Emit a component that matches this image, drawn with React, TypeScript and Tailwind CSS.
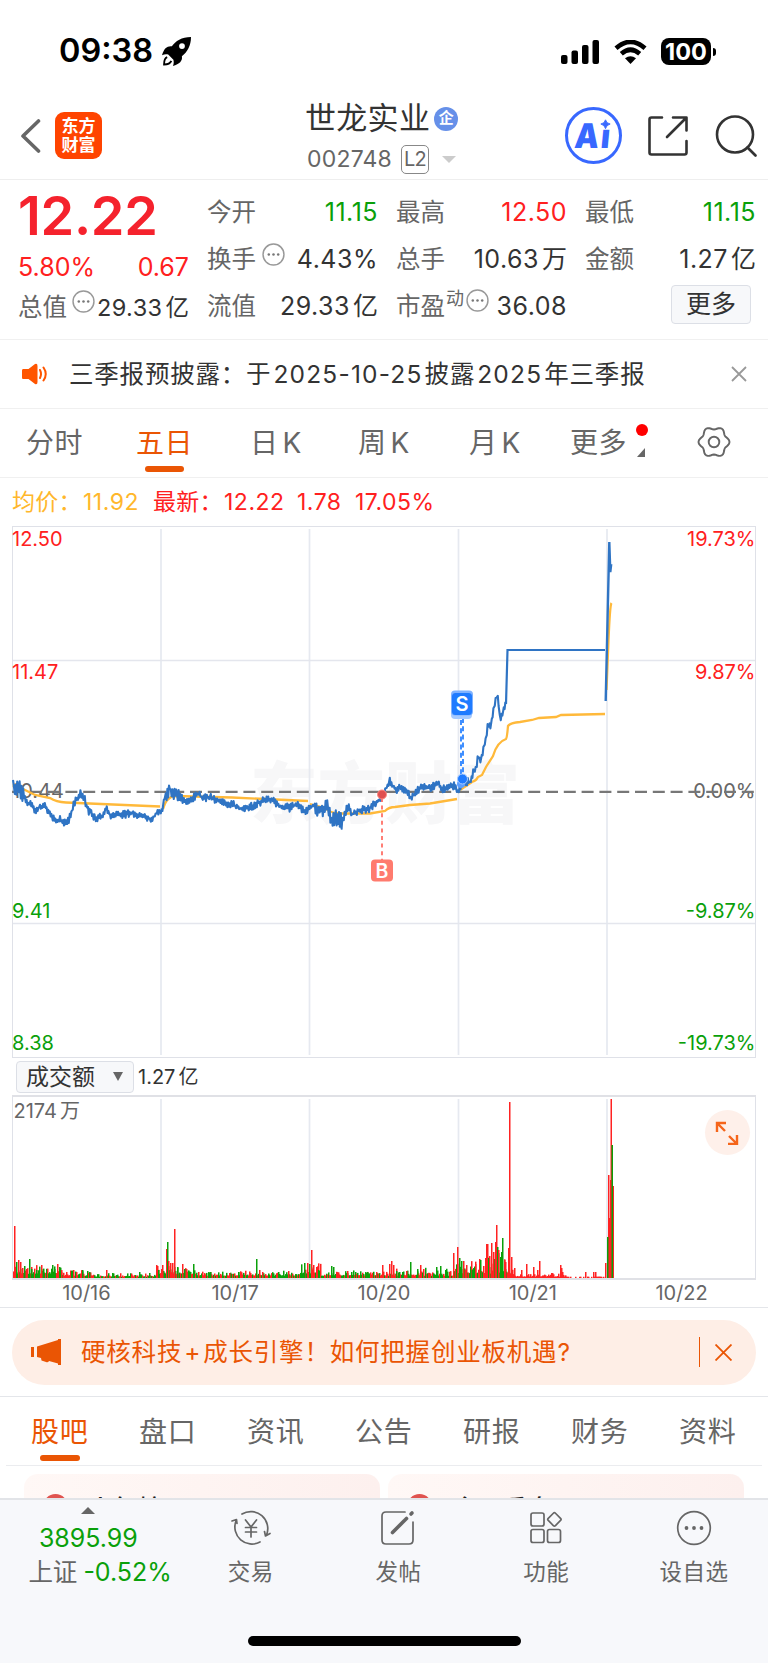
import type { ReactNode } from 'react'

type Point = [number, number]
type Bar = [number, number, 'r' | 'g']

const UP = '#ff2222'
const DOWN = '#0aa00a'

const priceLine: Point[] = [
  [13, 780], [14, 795], [18, 786], [20, 790], [25, 797], [28, 803], [32, 806], [36, 811], [40, 806], [45, 807],
  [49, 811], [52, 817], [56, 820], [60, 820], [64, 822], [69, 820], [72, 810], [74, 804], [78, 797], [81, 793],
  [84, 797], [88, 810], [92, 814], [95, 819], [99, 817], [102, 819], [106, 808], [110, 815], [120, 815],
  [130, 813], [140, 815], [150, 819], [154, 818], [156, 813], [160, 813], [163, 808], [165, 795], [170, 788],
  [173, 793], [177, 792], [183, 800], [190, 802], [198, 793], [202, 798], [210, 797], [218, 801], [225, 803],
  [232, 804], [240, 809], [248, 808], [258, 803], [265, 799], [272, 800], [280, 806], [290, 808], [297, 804],
  [304, 812], [308, 809], [312, 807], [314, 803], [318, 810], [324, 808], [328, 803], [331, 825], [335, 818],
  [340, 820], [343, 823], [345, 812], [348, 805], [352, 815], [358, 810], [365, 810], [370, 808], [376, 802],
  [382, 798], [386, 790], [389, 780], [393, 786], [396, 791], [400, 786], [407, 792], [411, 798], [417, 791],
  [422, 786], [430, 788], [438, 784], [443, 789], [450, 786], [456, 786], [458, 793], [463, 782], [470, 782],
  [474, 771], [476, 767], [478, 757], [481, 761], [484, 748], [486, 738], [488, 724], [491, 727], [494, 708],
  [497, 693], [499, 706], [500, 720], [503, 713], [506, 704],
]

const avgDays = [
  'M13 784 L25 790 L35 795 L50 798 Q56 802 66 802.500 L160 806.500',
  'M163 809 Q166 797 175 796 L232 797.500 L308 801',
  'M310 804 L325 808 Q330 813 340 813.500 L370 813.500 L385 811 Q389 807 395 807 L410 805 L430 803.500 L457 799',
  'M460 790 L472 782 Q476 781 478 777 L482 775 L486 767 L493 756 Q497 742 506 739 Q507 738 508 726 Q510 723 520 722 L532 720 L539 718 L556 717 L561 715 L605 714',
  'M606.500 690 L608.500 640 Q610 605 611.500 603',
]

const spikes: Bar[] = [
  [14, 52, 'r'], [16, 16, 'g'], [18, 18, 'r'], [20, 16, 'r'], [22, 10, 'r'], [24, 12, 'g'], [26, 9, 'r'],
  [29, 19, 'g'], [31, 9, 'g'], [36, 8, 'g'], [41, 13, 'r'], [43, 6, 'g'], [52, 13, 'g'], [54, 9, 'g'], [57, 14, 'r'],
  [59, 11, 'g'], [61, 8, 'r'], [66, 6, 'r'], [73, 8, 'r'], [76, 6, 'r'], [82, 8, 'g'], [89, 6, 'g'], [106, 8, 'r'],
  [112, 5, 'g'], [139, 6, 'g'], [149, 5, 'g'], [156, 13, 'r'], [158, 8, 'g'], [162, 13, 'r'], [166, 29, 'r'],
  [167, 36, 'g'], [168, 17, 'r'], [170, 15, 'r'], [172, 15, 'r'], [174, 49, 'r'], [177, 11, 'g'], [182, 14, 'r'],
  [184, 9, 'g'], [193, 14, 'g'], [198, 6, 'r'], [210, 6, 'g'], [229, 5, 'r'], [238, 6, 'g'], [256, 19, 'g'],
  [259, 8, 'r'], [262, 6, 'r'], [278, 6, 'g'], [288, 7, 'r'], [304, 15, 'g'], [307, 15, 'r'], [309, 14, 'g'],
  [311, 28, 'r'], [313, 13, 'r'], [316, 11, 'r'], [318, 8, 'g'], [331, 12, 'g'], [333, 11, 'g'], [336, 6, 'r'],
  [347, 7, 'r'], [351, 6, 'g'], [367, 6, 'g'], [376, 6, 'r'], [382, 13, 'r'], [389, 14, 'r'], [391, 17, 'r'],
  [393, 13, 'r'], [396, 7, 'g'], [402, 6, 'g'], [406, 7, 'r'], [410, 16, 'g'], [417, 9, 'g'], [420, 13, 'r'],
  [423, 9, 'r'], [436, 11, 'g'], [440, 12, 'g'], [445, 8, 'g'], [453, 25, 'r'], [457, 31, 'r'], [459, 20, 'g'],
  [461, 17, 'g'], [463, 17, 'r'], [466, 13, 'r'], [470, 8, 'g'], [475, 14, 'r'], [479, 19, 'r'], [480, 18, 'g'],
  [485, 20, 'r'], [486, 34, 'r'], [487, 34, 'r'], [488, 20, 'g'], [489, 22, 'r'], [491, 35, 'r'], [493, 26, 'r'],
  [495, 36, 'r'], [496, 53, 'r'], [497, 31, 'g'], [498, 28, 'r'], [500, 21, 'g'], [501, 26, 'g'], [502, 40, 'g'],
  [504, 18, 'r'], [505, 16, 'r'], [508, 30, 'r'], [509, 176, 'r'], [511, 21, 'r'], [514, 10, 'r'], [521, 8, 'r'],
  [526, 14, 'r'], [533, 11, 'r'], [537, 8, 'r'], [539, 17, 'r'], [551, 5, 'r'], [560, 13, 'r'], [561, 10, 'r'],
  [562, 6, 'r'], [585, 6, 'r'], [593, 6, 'r'], [595, 6, 'r'], [605, 15, 'r'], [608, 103, 'r'], [607, 41, 'g'],
  [609, 60, 'r'], [610, 98, 'r'], [612.5, 92, 'r'], [610.5, 179, 'r'], [611.5, 133, 'g'],
]

// ceiling of the quiet trading volume between the spikes: [until x, height]
const quietLevels: Point[] = [
  [60, 9], [90, 6], [155, 4], [190, 9], [300, 5], [320, 9], [380, 5], [395, 6], [452, 7], [470, 10], [484, 12],
  [507, 18], [512, 8], [545, 3], [566, 3], [604, 0.6],
]

function rand(n: number) {
  const v = Math.sin(n * 127.1 + 311.7) * 43758.5453
  return v - Math.floor(v)
}

function jitterPath(points: Point[]) {
  let d = `M${points[0][0]} ${points[0][1]}`
  let k = 0
  for (let i = 1; i < points.length; i++) {
    const [x0, y0] = points[i - 1]
    const [x1, y1] = points[i]
    for (let x = x0 + 0.8; x <= x1; x += 0.8) {
      const t = (x - x0) / (x1 - x0)
      const amp = x < 24 || (x > 310 && x < 348) || (x > 165 && x < 180) ? 8 : 4
      const y = y0 + (y1 - y0) * t + (k % 2 ? 1 : -1) * rand(k) * amp
      d += ` L${x.toFixed(1)} ${y.toFixed(1)}`
      k++
    }
  }
  return d
}

function quietBars() {
  const bars: Bar[] = []
  for (let x = 13; x < 604; x++) {
    const level = quietLevels.find(([until]) => x <= until)?.[1] ?? 0
    if (level < 1 && rand(x) > 0.4) continue
    const h = 1.2 + rand(x) * rand(x + 900) * level * 1.3 + (level > 7 ? 3 : level > 4 ? 1 : 0)
    bars.push([x, h, x > 510 || rand(x * 3) > 0.55 ? 'r' : 'g'])
  }
  return bars
}

function gearPath() {
  let d = ''
  for (let a = 0; a < 360; a += 6) {
    const t = (a * Math.PI) / 180
    const r = 14 + 1.5 * Math.cos(6 * t)
    d += `${a ? 'L' : 'M'}${(17 + r * Math.cos(t)).toFixed(2)} ${(17 + r * Math.sin(t)).toFixed(2)}`
  }
  return d + 'Z'
}

function More() {
  return (
    <svg viewBox="0 0 22 22" className="size-[23px] shrink-0">
      <circle cx="11" cy="11" r="10" fill="none" stroke="#999" strokeWidth="1.4" />
      {[6.5, 11, 15.5].map((x) => (
        <circle key={x} cx={x} cy="11" r="1.200" fill="#777" />
      ))}
    </svg>
  )
}

type StatProps = {
  label: string
  value: string
  unit?: string
  color?: string
  children?: ReactNode
}

function Stat({ label, value, unit, color = 'text-[#333]', children }: StatProps) {
  return (
    <div className="flex h-[47px] items-center">
      <span className="text-[24.5px] text-[#666]">{label}</span>
      {children}
      <span className={`ml-auto text-[25px] tracking-[0.5px] ${color}`}>
        {value}
        {unit && <span className="ml-[3px] tracking-normal">{unit}</span>}
      </span>
    </div>
  )
}

function StatusBar() {
  return (
    <div className="flex h-[85px] shrink-0 items-center pt-[18px] pl-[59px] pr-[52px] text-black">
      <span className="text-[32.5px] font-semibold">09:38</span>
      <svg viewBox="0 0 28 28" className="ml-[9px] size-[29px]">
        <path d="M28 0C19 0 13 4 9.5 9C5 8.5 2 11 0 17.5C2.5 16.5 4.5 16.5 6 17L11 22C11.5 24 11.5 26 10.5 28C17 26 20 23 19.2 18.5C24.500 14.500 28 8.500 28 0Z" />
        <circle cx="19.300" cy="8.800" r="2.800" fill="#fff" />
        <path d="M5 19.500C2.500 20.500 2 23 2 26.500C5.500 26.500 8 25.500 9 23" fill="none" stroke="#000" strokeWidth="1.800" />
      </svg>
      <div className="ml-auto flex items-center">
        <svg viewBox="0 0 39 24" className="h-6 w-[39px]">
          <rect x="0" y="15" width="6.500" height="9" rx="2" />
          <rect x="10.500" y="10.500" width="6.500" height="13.500" rx="2" />
          <rect x="21" y="5" width="6.500" height="19" rx="2" />
          <rect x="31.500" y="0" width="6.500" height="24" rx="2" />
        </svg>
        <svg viewBox="0 0 33 24" className="ml-[14px] h-6 w-[33px]">
          <path d="M2 8.300Q16.500 -4.500 31 8.300M7.300 13.800Q16.500 5.700 25.700 13.800" fill="none" stroke="#000" strokeWidth="4.600" />
          <path d="M16.500 24L11 18.300Q16.500 14 22 18.300Z" />
        </svg>
        <div className="ml-[14px] flex h-[27px] w-[50px] items-center justify-center rounded-[8px] bg-black text-[23.5px] font-bold text-white">
          100
        </div>
        <div className="ml-[2px] h-[8px] w-[3px] rounded-r-full bg-black" />
      </div>
    </div>
  )
}

function Header() {
  return (
    <div className="flex h-[95px] shrink-0 items-center border-b border-[#eee] pt-[7px] pl-[20px] pr-[11px]">
      <svg viewBox="0 0 21 36" className="h-9 w-[21px]" fill="none" stroke="#666" strokeWidth="3.600" strokeLinecap="round" strokeLinejoin="round">
        <path d="M18.500 3L3 18L18.500 33" />
      </svg>
      <div className="ml-[14px] flex size-[47px] flex-col items-center justify-center rounded-[9px] bg-[#ff4400] text-[17px] leading-[19px] font-bold text-white">
        <span>东方</span>
        <span>财富</span>
      </div>
      <div className="ml-[203px] flex flex-col pt-[3px]">
        <div className="flex h-[40px] items-center">
          <span className="text-[31px] tracking-[0.3px] text-[#333]">世龙实业</span>
          <span className="mt-[1px] ml-[4px] flex size-[24px] items-center justify-center rounded-full bg-[#6690e9] text-[15px] font-bold text-white">
            企
          </span>
        </div>
        <div className="flex h-[38px] items-center pt-[4px] pl-[2px]">
          <span className="w-[94px] text-[23px] tracking-[0.2px] text-[#666]">002748</span>
          <span className="flex h-[29px] w-[28px] items-center justify-center rounded-[5px] border border-[#888] text-[20px] tracking-[-0.8px] text-[#666]">
            L2
          </span>
          <svg viewBox="0 0 14 7" className="ml-[13px] h-[7px] w-[14px]" fill="#ccc">
            <path d="M0 0H14L7 7Z" />
          </svg>
        </div>
      </div>
      <div className="ml-auto flex items-center">
        <div className="relative flex size-[57px] items-center justify-center rounded-full border-[3px] border-[#3868ff] text-[34px] font-black text-[#3868ff]">
          <span className="-skew-x-6 scale-x-90 tracking-[2px]">Ai</span>
          <svg viewBox="0 0 14 12" className="absolute top-[8px] right-[7px] h-[12px] w-[13px]">
            <path d="M0 0H14V12H0Z" fill="#fff" />
            <path d="M7 1.500Q8 5.500 12 6Q8 7 7 11Q6 7 2 6Q6 5.500 7 1.500Z" fill="#3868ff" stroke="#3868ff" />
          </svg>
        </div>
        <svg viewBox="0 0 42 42" className="ml-[25px] size-[42px]" fill="none" stroke="#333" strokeWidth="2.600" strokeLinecap="round" strokeLinejoin="round">
          <path d="M15 2.500H4.500Q2.500 2.500 2.500 4.500V37.500Q2.500 39.500 4.500 39.500H37.500Q39.500 39.500 39.500 37.500V26M26 2.500H39.500V15.500M39 3L20 22" />
        </svg>
        <svg viewBox="0 0 42 42" className="ml-[26px] size-[42px]" fill="none" stroke="#333" strokeWidth="2.600" strokeLinecap="round">
          <circle cx="20" cy="19.500" r="18" />
          <path d="M32.500 32.500L40.500 40.500" />
        </svg>
      </div>
    </div>
  )
}

function Quote() {
  return (
    <div className="flex h-[160px] shrink-0 border-b border-[#f0f0f0] pt-[9px] pl-[18px] text-[#333]">
      <div className="w-[171px]">
        <div className="h-[55px] text-[54px] leading-[54px] font-semibold tracking-[-0.3px] text-[#f5222d]">12.22</div>
        <div className="flex h-[40px] items-center justify-between pt-[7px] text-[25px] text-[#ff2020]">
          <span>5.80%</span>
          <span>0.67</span>
        </div>
        <div className="flex h-[47px] items-center">
          <span className="text-[24.5px] text-[#666]">总值</span>
          <div className="mt-[-12px] ml-[5px]">
            <More />
          </div>
          <span className="ml-auto text-[23.5px] tracking-[0.4px]">
            29.33<span className="ml-[3px] tracking-normal">亿</span>
          </span>
        </div>
      </div>
      <div className="ml-[18px] w-[171px]">
        <Stat label="今开" value="11.15" color="text-[#0aa00a]" />
        <Stat label="换手" value="4.43%">
          <div className="mt-[-10px] ml-[6px]">
            <More />
          </div>
        </Stat>
        <Stat label="流值" value="29.33" unit="亿" />
      </div>
      <div className="ml-[18px] w-[171px]">
        <Stat label="最高" value="12.50" color="text-[#ff2020]" />
        <Stat label="总手" value="10.63" unit="万" />
        <Stat label="市盈" value="36.08">
          <sup className="top-[-8px] ml-[1px] text-[18px] text-[#666]">动</sup>
          <div className="mt-[-12px] ml-[2px]">
            <More />
          </div>
        </Stat>
      </div>
      <div className="ml-[18px] w-[171px]">
        <Stat label="最低" value="11.15" color="text-[#0aa00a]" />
        <Stat label="金额" value="1.27" unit="亿" />
        <div className="mt-[2px] mr-[5px] ml-auto flex h-[39px] w-[80px] items-center justify-center rounded-[4px] border border-[#dcdfe6] bg-[#f7f8fa] pt-px text-[25px]">
          更多
        </div>
      </div>
    </div>
  )
}

function Notice() {
  return (
    <div className="flex h-[69px] shrink-0 items-center border-b border-[#f0f0f0] pr-[21px] pl-[22px]">
      <svg viewBox="0 0 26 22" className="h-[22px] w-[26px]">
        <path d="M1 6H6.500L13 1Q15.500 0 15.500 3V19Q15.500 22 13 21L6.500 16H1Q0 16 0 14.500V7.500Q0 6 1 6Z" fill="#ff5500" />
        <path d="M18 7Q20 11 18 15M21.500 4.500Q26 11 21.500 17.500" fill="none" stroke="#ff5500" strokeWidth="2" strokeLinecap="round" />
      </svg>
      <span className="ml-[21px] text-[24.5px] tracking-[0.8px] text-[#333]">
        三季报预披露：于
        <span className="mx-[2px] tracking-[1.2px]">2025-10-25</span>
        披露
        <span className="mx-[2px] tracking-[1.2px]">2025</span>
        年三季报
      </span>
      <svg viewBox="0 0 16 16" className="ml-auto size-4" stroke="#999" strokeWidth="1.800">
        <path d="M1 1L15 15M15 1L1 15" />
      </svg>
    </div>
  )
}

const periods = [
  { label: '分时', width: 'w-[110px]' },
  { label: '五日', width: 'w-[114px]', active: true },
  { label: '日', k: true, width: 'w-[108px]' },
  { label: '周', k: true, width: 'w-[111px]' },
  { label: '月', k: true, width: 'w-[101px]' },
]

function PeriodTabs() {
  return (
    <div className="flex h-[69px] shrink-0 items-center border-b border-[#f0f0f0] pl-[26px] text-[28px] tracking-[0.5px] text-[#666]">
      {periods.map((p) => (
        <div key={p.label} className={`relative ${p.width} ${p.active ? 'text-[#ea5504]' : ''}`}>
          {p.label}
          {p.k && <span className="ml-[4px]">K</span>}
          {p.active && <span className="absolute bottom-[-8px] left-[9px] h-[6px] w-[39px] rounded-full bg-[#ea5504]" />}
        </div>
      ))}
      <div className="relative w-[127px]">
        更多
        <span className="absolute top-[2px] left-[66px] size-3 rounded-full bg-[#ff0000]" />
        <svg viewBox="0 0 8 9" className="absolute top-[26px] left-[67px] h-[9px] w-2" fill="#666">
          <path d="M8 0V9H0Z" />
        </svg>
      </div>
      <svg viewBox="0 0 34 34" className="mt-[-2px] size-[34px]" fill="none" stroke="#666" strokeWidth="1.900" strokeLinejoin="round">
        <circle cx="17" cy="17" r="5.300" />
        <path d={gearPath()} />
      </svg>
    </div>
  )
}

function Legend() {
  return (
    <div className="flex h-[47px] shrink-0 items-center pt-[2px] pl-[12px] text-[23px] tracking-[0.5px] text-[#ff2020]">
      <span className="w-[71px] tracking-[0.2px] text-[#ffb72b]">均价：</span>
      <span className="w-[70px] text-[#ffb72b]">11.92</span>
      <span className="w-[71px] tracking-[0.2px]">最新：</span>
      <span className="w-[73px]">12.22</span>
      <span className="w-[58px]">1.78</span>
      <span>17.05%</span>
    </div>
  )
}

const levels = [
  { y: 546, price: '12.50', pct: '19.73%', fill: '#ff2020' },
  { y: 678.5, price: '11.47', pct: '9.87%', fill: '#ff2020' },
  { y: 798, price: '10.44', pct: '0.00%', fill: '#666' },
  { y: 918, price: '9.41', pct: '-9.87%', fill: DOWN },
  { y: 1050, price: '8.38', pct: '-19.73%', fill: DOWN },
]

function PriceChart() {
  return (
    <svg viewBox="0 525 768 533" className="h-[533px] w-[768px] shrink-0" fontSize="20">
      <text x="250" y="818" fontSize="67.500" fontWeight="900" fill="#f7f7f8">东方财富</text>
      <rect x="12.500" y="526.500" width="743" height="531" fill="none" stroke="#dfe1e8" />
      {[161, 309.5, 458.5, 607].map((x) => (
        <path key={x} d={`M${x} 529V1055`} stroke="#e6e9f0" strokeWidth="1.700" />
      ))}
      <path d="M13 660.500H755M13 923.500H755" stroke="#e4e6ed" strokeWidth="1.400" />
      {levels.map((l) => (
        <g key={l.price} fill={l.fill}>
          <text x="12" y={l.y}>{l.price}</text>
          <text x="755.500" y={l.y} textAnchor="end">{l.pct}</text>
        </g>
      ))}
      <path d="M12 791.800H755" stroke="#777" strokeWidth="2.300" strokeDasharray="12 5.800" />
      {avgDays.map((d) => (
        <path key={d} d={d} fill="none" stroke="#ffb93a" strokeWidth="2.300" />
      ))}
      <path d={jitterPath(priceLine)} fill="none" stroke="#2f74c4" strokeWidth="2.100" strokeLinejoin="round" />
      <path d="M506 704L507.500 650H605" fill="none" stroke="#2f74c4" strokeWidth="2.200" />
      <path d="M605.700 701L609.300 542L610.300 572L611.200 564" fill="none" stroke="#2f74c4" strokeWidth="2.400" />

      <path d="M382 798V860" stroke="#ff7066" strokeWidth="1.800" strokeDasharray="4 3.600" />
      <circle cx="382" cy="794.500" r="4.500" fill="#e05050" stroke="#ff8a80" />
      <rect x="371" y="859.500" width="22" height="22" rx="4" fill="#ff7b6e" />
      <text x="382" y="877.500" fontSize="19.500" fontWeight="600" textAnchor="middle" fill="#fff">B</text>

      <path d="M461 720V780M463 718V780" stroke="#2b83ff" strokeWidth="1.800" strokeDasharray="5 3.200" />
      <circle cx="461" cy="784" r="4" fill="#5c9fff" />
      <circle cx="462.500" cy="779" r="5" fill="#1f7bff" stroke="#a9ccff" />
      <rect x="451" y="697" width="21" height="22" rx="4" fill="#a6caff" />
      <rect x="451" y="690.500" width="22" height="25" rx="4" fill="#7fb2ff" />
      <rect x="452" y="693" width="20" height="22" rx="3.500" fill="#1f7bff" />
      <text x="462" y="711" fontSize="20" fontWeight="600" textAnchor="middle" fill="#fff">S</text>
    </svg>
  )
}

function Volume() {
  return (
    <>
      <div className="flex h-[37px] shrink-0 items-center pl-[16px] text-[#333]">
        <div className="flex h-[32px] w-[118px] items-center rounded-[4px] border border-[#dcdfe6] bg-[#f7f8fa] pt-px pl-[9px] text-[23px]">
          成交额
          <svg viewBox="0 0 10 9" className="mt-[-2px] ml-[18px] h-[9px] w-[10px]" fill="#666">
            <path d="M0 0H10L5 9Z" />
          </svg>
        </div>
        <span className="ml-[4px] pt-px text-[20px]">
          1.27<span className="ml-[3px]">亿</span>
        </span>
      </div>
      <div className="relative h-[186px] shrink-0">
        <svg viewBox="0 1095 768 186" className="h-[186px] w-[768px]">
          {[161, 309.5, 458.5, 607].map((x) => (
            <path key={x} d={`M${x} 1099V1278`} stroke="#e6e9f0" strokeWidth="1.700" />
          ))}
          <path d="M12.500 1096V1278M755.500 1096V1278" stroke="#dfe1e8" />
          <path d="M12 1096H756M12 1279H756" stroke="#e0e1e6" strokeWidth="2" />
          {[...quietBars(), ...spikes].map(([x, h, c], i) => (
            <rect key={i} x={x} y={1278 - h} width="1.500" height={h} fill={c === 'r' ? UP : DOWN} />
          ))}
          <text x="13.500" y="1118" fontSize="20" fill="#666">
            2174<tspan dx="3">万</tspan>
          </text>
        </svg>
        <div className="absolute top-[15px] left-[705px] flex size-[45px] items-center justify-center rounded-full bg-[#fef0ea]">
          <svg viewBox="0 0 24 24" className="mr-px size-6" fill="none" stroke="#f5651a" strokeWidth="2.400">
            <path d="M2 11V2H11M2 2L10 10M22 14V23H13M22 23L14 15" />
          </svg>
        </div>
      </div>
      <div className="grid h-[27px] shrink-0 grid-cols-5 items-center border-b border-[#e4e6ea] px-[12px] pb-[3px] text-center text-[20px] leading-6 text-[#666]">
        {['10/16', '10/17', '10/20', '10/21', '10/22'].map((d) => (
          <span key={d}>{d}</span>
        ))}
      </div>
    </>
  )
}

function Banner() {
  return (
    <div className="flex h-[89px] shrink-0 items-center border-b border-[#e4e6ea] px-[12px]">
      <div className="flex h-[65px] w-full items-center rounded-full bg-[#feeee6] pr-[24px] pl-[19px] text-[#ea5504]">
        <svg viewBox="0 0 30 26" className="h-[26px] w-[30px]" fill="#ea5504">
          <path d="M0 8H3V18H0ZM6 7.500L27 1V0H30V26H27V24.500L18 22Q17 24 15 23L10.500 21.500L10 19L6 18Z" />
        </svg>
        <span className="ml-[20px] text-[24.5px] tracking-[0.8px]">
          硬核科技<span className="mx-[2px]">+</span>成长引擎！如何把握创业板机遇?
        </span>
        <span className="ml-auto h-[30px] w-px bg-[#ea5504]" />
        <svg viewBox="0 0 16 16" className="ml-[15px] size-[17px]" stroke="#ea5504" strokeWidth="1.700">
          <path d="M0.500 0.500L15.500 15.500M15.500 0.500L0.500 15.500" />
        </svg>
      </div>
    </div>
  )
}

const sections = ['股吧', '盘口', '资讯', '公告', '研报', '财务', '资料']

function SectionTabs() {
  return (
    <div className="mx-[6px] flex h-[69px] shrink-0 items-center border-b border-[#ebecef] pt-[2px] pl-[25px] text-[28px] tracking-[0.7px] text-[#666]">
      {sections.map((s, i) => (
        <div key={s} className={`relative w-[108px] shrink-0 ${i === 0 ? 'text-[#ea5504]' : ''}`}>
          {s}
          {i === 0 && <span className="absolute bottom-[-8px] left-[9px] h-[6px] w-[40px] rounded-full bg-[#ea5504]" />}
        </div>
      ))}
    </div>
  )
}

function Cards() {
  return (
    <div className="flex h-[32px] shrink-0 gap-[8px] overflow-hidden pt-[8px] pl-[24px]">
      {['人气榜', '今日看盘'].map((t) => (
        <div key={t} className="flex h-[80px] w-[356px] shrink-0 items-start rounded-[14px] bg-linear-to-r from-[#fff8f6] to-[#fdf0ee] pt-[20px] pl-[19px]">
          <span className="size-[25px] rounded-full bg-[#e0534f]" />
          <span className="ml-[20px] text-[25px] leading-[30px] font-medium text-[#222]">{t}</span>
        </div>
      ))}
    </div>
  )
}

type ActionProps = { label: string; children: ReactNode }

function Action({ label, children }: ActionProps) {
  return (
    <div className="flex w-[148px] flex-col items-center pt-[8px]">
      <svg viewBox="0 0 40 40" className="size-10" fill="none" stroke="#666" strokeWidth="1.700" strokeLinecap="round" strokeLinejoin="round">
        {children}
      </svg>
      <span className="mt-[9px] text-[22.5px] leading-[30px] tracking-[0.5px] text-[#666]">{label}</span>
    </div>
  )
}

function BottomBar() {
  return (
    <div className="flex h-[165px] shrink-0 flex-col border-t-2 border-[#e2e4e8] bg-[#f7f8fb]">
      <div className="flex h-[136px]">
        <div className="flex w-[177px] flex-col items-center text-[25px] text-[#0aa00a]">
          <svg viewBox="0 0 14 7" className="mt-[7px] h-[7px] w-[14px]" fill="#666">
            <path d="M7 0L14 7H0Z" />
          </svg>
          <span className="mt-[9px] leading-[30px]">3895.99</span>
          <span className="mt-[4px] ml-[28px] flex w-[148px] gap-[6px] leading-[30px] whitespace-nowrap">
            <span className="text-[24.5px] text-[#666]">上证</span>
            -0.52%
          </span>
        </div>
        <Action label="交易">
          <path d="M11 6A17 17 0 0 1 35.500 27M29 34A17 17 0 0 1 5 13M1 13L5.500 11.500L6 15.500M33.500 23.500L34.500 28L39 25.500" />
          <path d="M14.500 12L20 19L25.500 12M20 19V29M14.500 19.500H25.500M14.500 24H25.500" />
        </Action>
        <Action label="发帖">
          <path d="M27 4H8Q4 4 4 8V32Q4 36 8 36H31Q35 36 35 32V14" />
          <path d="M14.500 24.500L28.500 10.500" strokeWidth="3.600" />
          <path d="M33 6L34 5" strokeWidth="3.600" />
        </Action>
        <Action label="功能">
          <rect x="5" y="5" width="13" height="13" rx="2" />
          <rect x="5" y="21.500" width="13" height="13" rx="2" />
          <rect x="21.500" y="21.500" width="13" height="13" rx="2" />
          <rect x="23.300" y="6.300" width="10.200" height="10.200" rx="1.500" transform="rotate(45 28.400 11.400)" />
        </Action>
        <Action label="设自选">
          <circle cx="20" cy="20" r="16.300" />
          <g fill="#666" stroke="none">
            <circle cx="12.500" cy="20" r="1.900" />
            <circle cx="20" cy="20" r="1.900" />
            <circle cx="27.500" cy="20" r="1.900" />
          </g>
        </Action>
      </div>
      <div className="mx-auto h-[10px] w-[273px] rounded-full bg-black" />
    </div>
  )
}

export default function App() {
  return (
    <div className="flex h-[1663px] w-[768px] flex-col overflow-hidden bg-white font-['Inter','Noto_Sans_CJK_SC',sans-serif]">
      <StatusBar />
      <Header />
      <Quote />
      <Notice />
      <PeriodTabs />
      <Legend />
      <PriceChart />
      <Volume />
      <Banner />
      <SectionTabs />
      <Cards />
      <BottomBar />
    </div>
  )
}
